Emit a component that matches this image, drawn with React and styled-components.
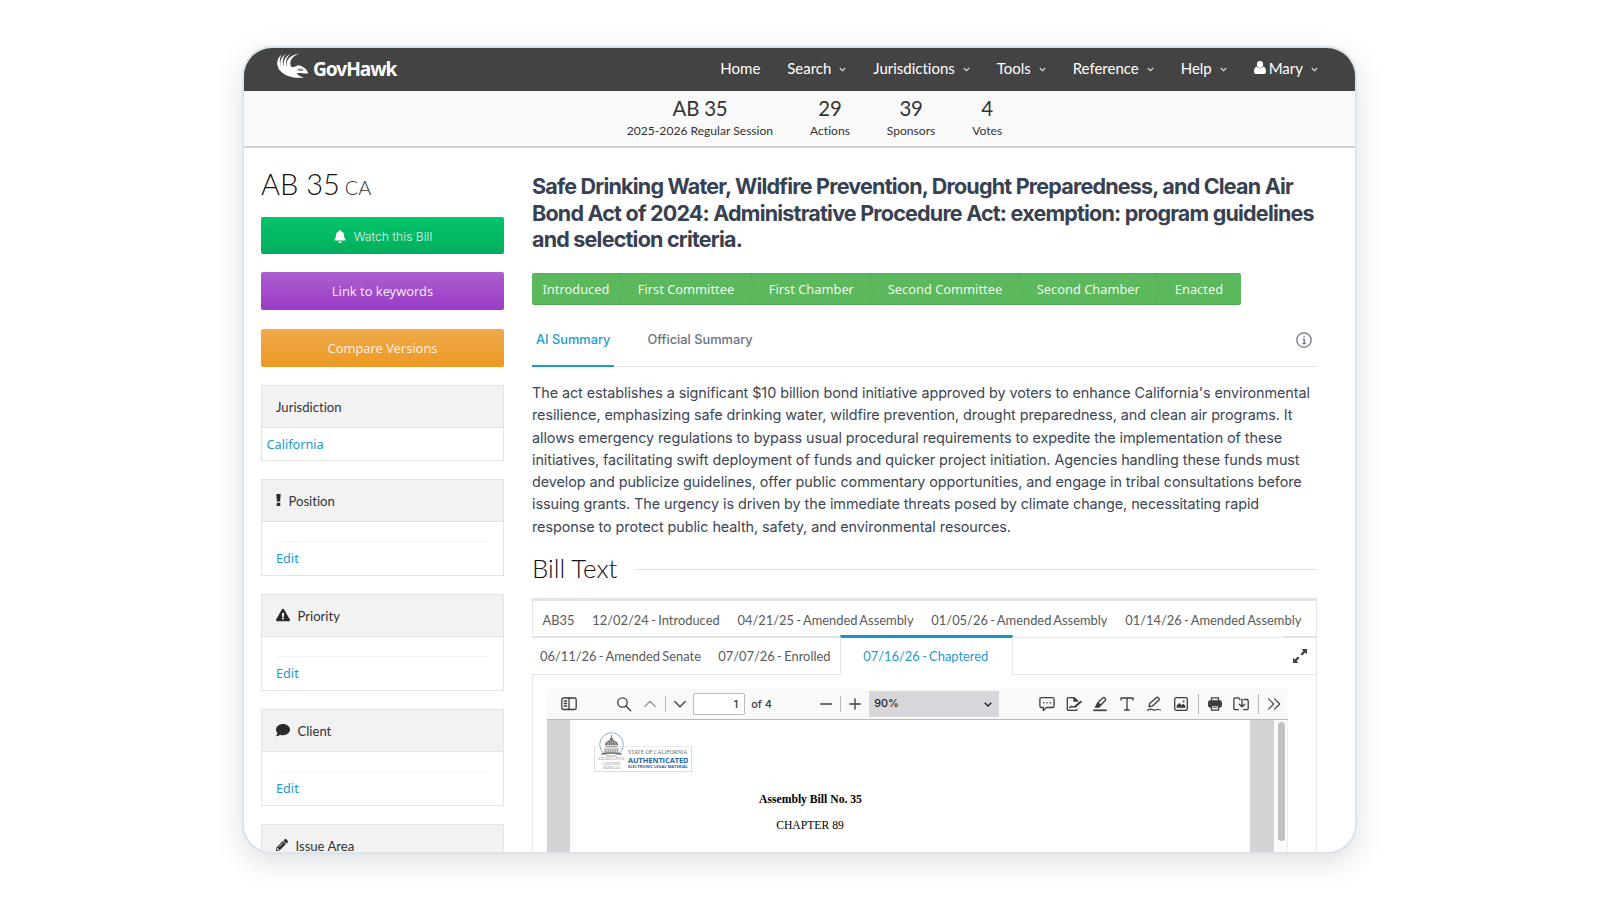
import React from "react";
import styled, { createGlobalStyle } from "styled-components";
import {
  FaBell,
  FaExclamationTriangle,
  FaComment,
  FaPencilAlt,
} from "react-icons/fa";

const GlobalStyle = createGlobalStyle`
  * {
    box-sizing: border-box;
  }
  body {
    margin: 0;
    background: #fff;
    color: #333;
    font-family: Lato, "Liberation Sans", sans-serif;
    font-variant-ligatures: none;
  }
  h1, h2, h3, p {
    margin: 0;
  }
  svg {
    display: block;
    flex: none;
  }
`;

const Page = styled.div`
  width: 1600px;
  height: 900px;
  padding: 46px 0 0 242px;
  overflow: hidden;
`;

const Card = styled.div`
  width: 1115px;
  height: 808px;
  border: 2px solid #d9e4ec;
  border-radius: 30px;
  overflow: hidden;
  background: #fff;
  box-shadow: 0 9px 28px rgba(60, 70, 80, 0.17);
`;

const NavBar = styled.div`
  height: 43px;
  background: #434343;
  color: #fff;
  display: flex;
  align-items: center;
  justify-content: space-between;
  padding: 0 37px 3px 32px;
`;

const Brand = styled.div`
  display: flex;
  align-items: center;
  gap: 4px;
  height: 40px;
  padding-bottom: 5px;
`;

const BrandName = styled.span`
  padding-top: 7px;
  font: 700 19.2px/24px "Noto Sans", sans-serif;
  letter-spacing: -1.1px;
`;

const NavItems = styled.div`
  display: flex;
  align-items: center;
  gap: 26.9px;
`;

const NavItem = styled.div`
  display: flex;
  align-items: center;
  font-size: 15px;
  line-height: 20px;
`;

const Caret = styled.svg`
  width: 7px;
  height: 5px;
  margin: 3px 0 0 8px;
`;

const UserIcon = styled.svg`
  width: 12px;
  height: 13px;
  margin: 0 3px 1px 0;
`;

const StatsBar = styled.div`
  height: 57px;
  background: #f9f9f9;
  border-bottom: 2px solid #d0d0d0;
  display: flex;
  justify-content: center;
  gap: 36.9px;
  padding: 4px 0 0 30px;
`;

const Stat = styled.div`
  display: flex;
  flex-direction: column;
  align-items: center;
`;

const StatValue = styled.div`
  font-size: 20.4px;
  line-height: 26px;
  letter-spacing: -0.2px;
`;

const StatLabel = styled.div`
  margin-top: 2px;
  font-size: 12.1px;
  line-height: 16px;
`;

const Main = styled.div`
  display: grid;
  grid-template-columns: 243px 785px;
  column-gap: 28px;
  padding: 18px 0 0 17px;
`;

const Sidebar = styled.div`
  display: flex;
  flex-direction: column;
`;

const BillNumber = styled.h1`
  height: 36px;
  font-size: 29px;
  font-weight: 300;
  line-height: 36px;
  color: #111;
  margin-bottom: 15px;
`;

const StateCode = styled.span`
  margin-left: -3px;
  font-size: 20px;
  color: #333;
`;

const ActionButton = styled.div`
  height: 38px;
  margin-bottom: 18.5px;
  display: flex;
  align-items: center;
  justify-content: center;
  border-radius: 2px;
  background: linear-gradient(${(p) => p.$from}, ${(p) => p.$to});
  color: rgba(255, 255, 255, 0.88);
  font: 400 12.85px/20px "Noto Sans", sans-serif;
`;

const WatchButton = styled(ActionButton)`
  height: 37px;
  margin-bottom: 18px;
  gap: 8px;
  padding: 2px 0 0 1px;
  font: 300 12.2px/20px Inter, sans-serif;
  svg {
    width: 12px;
    height: 13px;
    color: #fff;
  }
`;

const Panel = styled.div`
  height: ${(p) => p.$height || 97}px;
  margin-bottom: 18px;
  border: 1px solid #e3e3e3;
`;

const PanelHead = styled.div`
  height: 42px;
  display: flex;
  align-items: center;
  gap: 7.5px;
  padding-left: 14px;
  background: #f2f2f2;
  border-bottom: 1px solid #e3e3e3;
  font-size: 13.1px;
  svg {
    color: #2b2b2b;
    margin-bottom: 2px;
  }
`;

const PanelBody = styled.div`
  margin: 19px 15px 0 14px;
  padding-top: 5px;
  border-top: 1px solid #f3f3f3;
`;

const Link = styled.span`
  font: 400 12.7px/20px "Noto Sans", sans-serif;
  color: #2399d3;
`;

const JurisdictionBody = styled.div`
  padding: 5px 4.5px;
  line-height: 20px;
`;

const Content = styled.div`
  padding-top: 7px;
`;

const Title = styled.h2`
  height: 80px;
  margin-bottom: 20.3px;
  font: 700 21.5px/26.7px Inter, sans-serif;
  letter-spacing: -0.79px;
  color: #374151;
  white-space: nowrap;
`;

const Progress = styled.div`
  width: 709px;
  height: 31.4px;
  display: flex;
  align-items: center;
  padding-left: 10.5px;
  border-radius: 3px;
  background: #5cb85c;
  box-shadow: inset 0 -1px 0 #53a953, inset 0 1px 0 #56b056;
`;

const Step = styled.div`
  width: ${(p) => p.$width}px;
  height: 100%;
  display: flex;
  align-items: center;
  justify-content: space-between;
  padding-right: 12px;
  color: rgba(255, 255, 255, 0.92);
  font: 400 12.85px/20px "Noto Sans", sans-serif;
`;

const SummaryTabs = styled.div`
  height: 62.3px;
  display: flex;
  align-items: stretch;
  border-bottom: 1px solid #e5e7eb;
`;

const SummaryTab = styled.div`
  padding: 25px 4px 0;
  margin-right: 29px;
  margin-bottom: -1px;
  font: 500 12.8px/20px Inter, sans-serif;
  color: ${(p) => (p.$active ? "#1d9bd1" : "#6b7280")};
  border-bottom: 2px solid ${(p) => (p.$active ? "#1d9bd1" : "transparent")};
`;

const InfoIcon = styled.svg`
  width: 16px;
  height: 16px;
  margin: 27.5px 5px 0 auto;
`;

const Summary = styled.p`
  height: 155.8px;
  margin: 15.2px 0 15.5px;
  font: 400 14.4px/22.25px Inter, sans-serif;
  letter-spacing: -0.07px;
  color: #3c4656;
  white-space: nowrap;
`;

const SectionTitle = styled.h3`
  display: flex;
  align-items: center;
  gap: 19px;
  margin-bottom: 15px;
  font-size: 25.8px;
  font-weight: 300;
  line-height: 30px;
  color: #111;
  &::after {
    content: "";
    flex: 1;
    height: 1px;
    margin-top: 2px;
    background: #e2e2e2;
  }
`;

const VersionRow = styled.div`
  height: 37px;
  display: flex;
  align-items: center;
  gap: 17.8px;
  padding: 2.5px 0 0 9.5px;
  border: solid #e4e4e4;
  border-width: 3px 1px 0;
`;

const VersionTab = styled.span`
  font-size: 12.9px;
  line-height: 20px;
  word-spacing: -1px;
  color: #5a5a5a;
`;

const VersionRowActive = styled.div`
  height: 40px;
  display: flex;
  align-items: stretch;
  border-right: 1px solid #e6e6e6;
`;

const InactiveTabs = styled.div`
  width: 308px;
  margin-top: 1px;
  display: flex;
  align-items: center;
  gap: 17.3px;
  padding-left: 8px;
  border-top: 2px solid #e2e2e2;
  border-bottom: 1px solid #e6e6e6;
`;

const ActiveTab = styled.div`
  width: 173px;
  display: flex;
  align-items: center;
  justify-content: center;
  padding: 0 1.5px 1px 0;
  border: 1px solid #e6e6e6;
  border-top: 3px solid #1a91ca;
  border-bottom: none;
  span {
    color: #2399d3;
  }
`;

const TabsRest = styled.div`
  flex: 1;
  margin-top: 2px;
  display: flex;
  justify-content: flex-end;
  border-top: 1px solid #ebebeb;
  border-bottom: 1px solid #e6e6e6;
`;

const ExpandCell = styled.div`
  width: 32px;
  margin-top: -2px;
  padding: 11px 0 0 9px;
  border-top: 2px solid #e2e2e2;
`;

const TextPanel = styled.div`
  height: 190px;
  padding: 14px 0 0 14px;
  border: solid #e6e6e6;
  border-width: 0 1px;
`;

const Viewer = styled.div`
  width: 741px;
`;

const Toolbar = styled.div`
  height: 31px;
  display: flex;
  align-items: center;
  background: #f9f9fa;
  border-bottom: 1px solid #b9b9bb;
  color: #3d3d3f;
`;

const ToolGroup = styled.div`
  display: flex;
  align-items: center;
  margin-left: ${(p) => p.$left || 0}px;
`;

const Tool = styled.div`
  width: ${(p) => p.$width || 26.7}px;
  height: 26px;
  display: flex;
  align-items: center;
  justify-content: center;
  opacity: ${(p) => (p.$dim ? 0.5 : 1)};
`;

const Divider = styled.div`
  width: 1px;
  height: ${(p) => p.$height || 16}px;
  margin: 0 ${(p) => p.$space || 0}px;
  background: #b8b8bb;
`;

const PageInput = styled.div`
  width: 52px;
  height: 22px;
  padding-right: 6px;
  border: 1px solid #bbbbbc;
  border-radius: 2px;
  background: #fff;
  text-align: right;
  font: 500 11px/20px Inter, sans-serif;
`;

const PageTotal = styled.span`
  width: 21px;
  margin-left: 6px;
  white-space: nowrap;
  font: 500 10.9px/20px Inter, sans-serif;
`;

const ZoomSelect = styled.div`
  width: 130px;
  height: 26px;
  margin-left: 1px;
  display: flex;
  align-items: center;
  justify-content: space-between;
  padding: 0 7px 0 5px;
  background: #d7d7db;
  color: #1c1c1e;
  font: 500 10.8px/20px Inter, sans-serif;
`;

const ViewerBody = styled.div`
  height: 140px;
  display: flex;
  padding-left: 23px;
  background: #d4d4d7;
`;

const Sheet = styled.div`
  width: 680px;
  padding: 12px 0 0 24px;
  background: #fff;
`;

const ScrollTrack = styled.div`
  width: 14px;
  margin-left: auto;
  padding: 2px 0 0 4px;
  background: #fbfbfb;
  border-right: 1px solid #ededed;
`;

const ScrollThumb = styled.div`
  width: 7px;
  height: 119px;
  border-radius: 4px;
  background: #c1c1c1;
`;

const Seal = styled.div`
  width: 98px;
  height: 26px;
  margin-top: 14px;
  display: flex;
  border: 1px solid #dcdcdc;
  border-top-color: #ececec;
`;

const SealEmblem = styled.div`
  width: 33px;
  margin-top: -15px;
  display: flex;
  flex-direction: column;
  align-items: center;
  font: 400 4.1px/4.3px "Liberation Serif", serif;
  text-align: center;
  color: #8d8d8d;
`;

const SealText = styled.div`
  padding-top: 2px;
  white-space: nowrap;
  color: #1f62a8;
`;

const SealState = styled.div`
  font: 400 5.5px/7px "Liberation Serif", serif;
  color: #666;
`;

const SealAuth = styled.div`
  font: 700 7.3px/8px "Open Sans", sans-serif;
`;

const SealKind = styled.div`
  font: 700 4.05px/5px "Open Sans", sans-serif;
`;

const ActHeading = styled.div`
  width: 433px;
  margin-top: 19px;
  text-align: center;
  color: #000;
  font: 700 11.65px/18px "Liberation Serif", serif;
`;

const Chapter = styled(ActHeading)`
  width: 432px;
  margin-top: 8px;
  font-weight: 400;
`;

const stroke = {
  fill: "none",
  stroke: "currentColor",
  strokeWidth: 1.3,
  strokeLinecap: "round",
  strokeLinejoin: "round",
};

const HawkLogo = () => (
  <svg width="33" height="27" viewBox="0 0 33 27" fill="#fff">
    <path d="M6 2.3C.5 6.500-.5 13 4 18.500L6.500 17C3 12 3 6.500 6 2.300z" />
    <path d="M10.300 1.600C4 6 2.800 12 6 17.500l3-.5C5.700 11.500 6.300 6 10.300 1.600z" />
    <path d="M15.200 1.200C7.500 5.500 6 11.500 9 17.500l3-.5C8.800 11.500 9.500 5.500 15.200 1.200z" />
    <path d="M23.200 1.500C12 3.500 8.500 10 12 17l4-1c-3.700-5-1.500-11 7.200-14.500z" />
    <path d="M3 17C8 24.500 18 26.800 28 25.400c-3.600-.8-6-2-7.300-4.200 3.600-.9 7.400.8 11.400.3C31 17 27 14 22 13.300c-2 1.400-4.300 1.900-6.400 1.700C13 13.500 6 13 3 17z" />
    <path
      d="M22 17.600c1.700-.9 3.300-.7 4.800.4-1.600.6-3.200.6-4.800-.4z"
      fill="none"
      stroke="#434343"
      strokeWidth=".9"
    />
  </svg>
);

const Chevron = () => (
  <Caret viewBox="0 0 7 5">
    <path d="M.8 1l2.700 2.700L6.200 1" fill="none" stroke="#ddd" strokeWidth="1.1" />
  </Caret>
);

const StepArrow = () => (
  <svg width="9" height="29" viewBox="0 0 9 29">
    <path d="M1 0l7 14.500L1 29" fill="none" stroke="#55b055" strokeWidth="1.1" />
  </svg>
);

const Dome = () => (
  <svg width="25" height="25" viewBox="0 0 25 25">
    <circle cx="12.500" cy="12.500" r="11.800" fill="#fff" stroke="#7fa5c9" strokeWidth=".9" />
    <path fill="#777" d="M12 3h1v3h1.200v2c3 .8 4.800 2.700 5 5.200H5.800c.2-2.500 2-4.400 5-5.200V6H12z" />
    <path d="M6.500 14.700h12M5 17h15" stroke="#999" strokeWidth="1.2" />
    <path d="M5.500 19h14" stroke="#888" strokeWidth="2.6" strokeDasharray="1 .8" />
    <path d="M2.500 22.300c4-1.600 16-1.600 20 0" stroke="#666" strokeWidth="1.5" fill="none" />
    <path d="M9 9v4M11.300 8.500V13M13.700 8.500V13M16 9v4" stroke="#ddd" strokeWidth=".5" />
  </svg>
);

const ExclamationIcon = () => (
  <svg width="5" height="12" viewBox="0 0 5 12">
    <path d="M.3 0h4.400l-.6 7.500H.9zM.7 8.700h3.600V12H.7z" fill="#2b2b2b" />
  </svg>
);

const icons = {
  sidebar: (
    <>
      <rect x=".8" y="2" width="14.400" height="11.500" rx="1.800" />
      <path d="M8 2v11.500M3.200 5h2.400M3.200 7.500h2.400M3.200 10h2.400" />
    </>
  ),
  search: (
    <>
      <circle cx="6.500" cy="6.500" r="4.700" />
      <path d="M10 10l4.700 4.700" />
    </>
  ),
  up: <path d="M2.800 10.500L8 5.300l5.200 5.200" />,
  down: <path d="M2.800 5.500L8 10.700l5.200-5.200" />,
  minus: <path d="M2.700 8h10.600" />,
  plus: <path d="M2.700 8h10.600M8 2.700v10.600" />,
  comment: (
    <>
      <path d="M2.300 1.700h11.400a1.400 1.400 0 011.400 1.400v7a1.400 1.400 0 01-1.400 1.400H7.500L4.300 14.600v-3.100h-2A1.400 1.400 0 01.9 10.100v-7a1.400 1.400 0 011.400-1.400z" />
      <path d="M4.700 6.700h.1M8 6.700h.1M11.300 6.700h.1" strokeWidth="1.6" />
    </>
  ),
  sign: (
    <>
      <path d="M11 13.400a1.300 1.300 0 01-1.300 1H2.600a1.300 1.300 0 01-1.300-1.300V2.900a1.300 1.300 0 011.300-1.300H8L11.500 5" />
      <path d="M8 1.800V5h3.200z" fill="currentColor" />
      <path d="M3.500 11.800l1.800-1.700 1 1.200 1.200-.8" />
      <path d="M9 10.800l5.700-5" strokeWidth="2.1" />
    </>
  ),
  highlight: (
    <>
      <path d="M6 6.500l5-4.700a1 1 0 011.400 0l1 1a1 1 0 010 1.400L8.700 9.300z" />
      <path d="M5.500 7.200l2.700 2.600-1.500 1.400H3.500z" fill="currentColor" />
      <path d="M1.300 14.300h13.400" strokeWidth="1.7" strokeLinecap="butt" />
    </>
  ),
  text: <path d="M2 4V2h12v2M8 2v12M5.700 14h4.600" />,
  draw: (
    <>
      <path d="M3 10.700l.7-3.200 6.800-5.900a1.300 1.300 0 011.800.1l.6.7a1.300 1.300 0 01-.1 1.800L6.200 10.200z" />
      <path d="M1.500 14.300c4-3 5.500.2 7.500-.2 1.500-.3 2.500-1.200 5.500-.1" strokeWidth="1.1" />
    </>
  ),
  image: (
    <>
      <rect x="1.700" y="1.700" width="12.600" height="12.600" rx="1.600" />
      <path d="M4 11.200V9.400l2.300-2 2.200 2 1.600-1.200L12 9.700v1.500z" fill="currentColor" strokeWidth=".8" />
      <path d="M10.600 5.500h.1" strokeWidth="1.8" />
    </>
  ),
  print: (
    <>
      <path d="M4.500 4.800V1.800h7v3" />
      <rect x="1.700" y="5" width="12.600" height="6" rx="1.400" fill="currentColor" />
      <path d="M4.500 9.500h7v4.700h-7z" fill="#f9f9fa" />
      <path d="M6.300 11.500h3.400" strokeWidth=".8" />
    </>
  ),
  save: (
    <>
      <path d="M5.500 13.600H2.100a1.200 1.200 0 01-1.200-1.200V3a1.200 1.200 0 011.200-1.200h3.200L7 3.500M11 3.500h3a1.200 1.200 0 011.200 1.200v7.700a1.200 1.200 0 01-1.200 1.200h-3.500" />
      <path d="M9 3.200v7.500M6.300 8.200L9 10.900l2.700-2.700" />
    </>
  ),
  more: <path d="M2.500 2.800L7.700 8l-5.200 5.200M8.500 2.800L13.700 8l-5.200 5.200" strokeWidth="1.1" />,
};

const ToolIcon = ({ name, width, dim }) => (
  <Tool $width={width} $dim={dim}>
    <svg width="16" height="16" viewBox="0 0 16 16" {...stroke}>
      {icons[name]}
    </svg>
  </Tool>
);

const navItems = ["Search", "Jurisdictions", "Tools", "Reference", "Help"];

const stats = [
  ["AB 35", "2025-2026 Regular Session"],
  ["29", "Actions"],
  ["39", "Sponsors"],
  ["4", "Votes"],
];

const panels = [
  { title: "Position", icon: <ExclamationIcon />, editable: true },
  { title: "Priority", icon: <FaExclamationTriangle size={14} />, editable: true },
  { title: "Client", icon: <FaComment size={14} />, editable: true },
  { title: "Issue Area", icon: <FaPencilAlt size={12} /> },
];

const steps = [
  ["Introduced", 95.3],
  ["First Committee", 131],
  ["First Chamber", 119],
  ["Second Committee", 149],
  ["Second Chamber", 138],
];

const titleLines = [
  "Safe Drinking Water, Wildfire Prevention, Drought Preparedness, and Clean Air",
  "Bond Act of 2024: Administrative Procedure Act: exemption: program guidelines",
  "and selection criteria.",
];

const summaryLines = [
  "The act establishes a significant $10 billion bond initiative approved by voters to enhance California's environmental",
  "resilience, emphasizing safe drinking water, wildfire prevention, drought preparedness, and clean air programs. It",
  "allows emergency regulations to bypass usual procedural requirements to expedite the implementation of these",
  "initiatives, facilitating swift deployment of funds and quicker project initiation. Agencies handling these funds must",
  "develop and publicize guidelines, offer public commentary opportunities, and engage in tribal consultations before",
  "issuing grants. The urgency is driven by the immediate threats posed by climate change, necessitating rapid",
  "response to protect public health, safety, and environmental resources.",
];

const versions = [
  "AB35",
  "12/02/24 - Introduced",
  "04/21/25 - Amended Assembly",
  "01/05/26 - Amended Assembly",
  "01/14/26 - Amended Assembly",
];

const PdfToolbar = () => (
  <Toolbar>
    <ToolGroup $left={8.3}>
      <ToolIcon name="sidebar" />
    </ToolGroup>
    <ToolGroup $left={28.5}>
      <ToolIcon name="search" />
      <ToolIcon name="up" width={26.5} dim />
      <Divider $space={1} />
      <ToolIcon name="down" width={26.5} />
      <PageInput>1</PageInput>
      <PageTotal>of 4</PageTotal>
    </ToolGroup>
    <ToolGroup $left={40.5}>
      <ToolIcon name="minus" width={27} />
      <Divider $space={0.3} />
      <ToolIcon name="plus" width={27} />
      <ZoomSelect>
        90%
        <svg width="8" height="5" viewBox="0 0 8 5">
          <path d="M.7.700L4 4 7.300.700" fill="none" stroke="currentColor" strokeWidth="1.3" />
        </svg>
      </ZoomSelect>
    </ToolGroup>
    <ToolGroup $left={34.500}>
      <ToolIcon name="comment" />
      <ToolIcon name="sign" />
      <ToolIcon name="highlight" />
      <ToolIcon name="text" width={27} />
      <ToolIcon name="draw" width={27} />
      <ToolIcon name="image" width={27} />
      <Divider $height={20} $space={3} />
      <ToolIcon name="print" width={26} />
      <ToolIcon name="save" />
      <Divider $height={20} $space={3} />
      <ToolIcon name="more" width={25} />
    </ToolGroup>
  </Toolbar>
);

const App = () => {
  return (
    <Page>
      <GlobalStyle />
      <Card>
        <NavBar>
          <Brand>
            <HawkLogo />
            <BrandName>GovHawk</BrandName>
          </Brand>
          <NavItems>
            <NavItem>Home</NavItem>
            {navItems.map((item) => (
              <NavItem key={item}>
                {item}
                <Chevron />
              </NavItem>
            ))}
            <NavItem>
              <UserIcon viewBox="0 0 12 13" fill="#fff">
                <ellipse cx="6" cy="3.400" rx="3.100" ry="3.400" />
                <path d="M2.600 5.600C.6 6.200 0 8.500 0 10.400 0 12.200 1 13 2.400 13h7.200c1.400 0 2.400-.8 2.400-2.600 0-1.900-.6-4.200-2.600-4.800-.8 1-2 1.700-3.400 1.700s-2.600-.7-3.400-1.700z" />
              </UserIcon>
              Mary
              <Chevron />
            </NavItem>
          </NavItems>
        </NavBar>
        <StatsBar>
          {stats.map(([value, label]) => (
            <Stat key={label}>
              <StatValue>{value}</StatValue>
              <StatLabel>{label}</StatLabel>
            </Stat>
          ))}
        </StatsBar>
        <Main>
          <Sidebar>
            <BillNumber>
              AB 35 <StateCode>CA</StateCode>
            </BillNumber>
            <WatchButton $from="#03c56b" $to="#05ae5e">
              <FaBell />
              Watch this Bill
            </WatchButton>
            <ActionButton $from="#ac5fd0" $to="#9a3bc6">
              Link to keywords
            </ActionButton>
            <ActionButton $from="#f0ab4c" $to="#ec9922">
              Compare Versions
            </ActionButton>
            <Panel $height={76}>
              <PanelHead>Jurisdiction</PanelHead>
              <JurisdictionBody>
                <Link>California</Link>
              </JurisdictionBody>
            </Panel>
            {panels.map((panel) => (
              <Panel key={panel.title}>
                <PanelHead>
                  {panel.icon}
                  {panel.title}
                </PanelHead>
                {panel.editable && (
                  <PanelBody>
                    <Link>Edit</Link>
                  </PanelBody>
                )}
              </Panel>
            ))}
          </Sidebar>
          <Content>
            <Title>
              {titleLines.map((line) => (
                <div key={line}>{line}</div>
              ))}
            </Title>
            <Progress>
              {steps.map(([label, width]) => (
                <Step key={label} $width={width}>
                  {label}
                  <StepArrow />
                </Step>
              ))}
              <Step>Enacted</Step>
            </Progress>
            <SummaryTabs>
              <SummaryTab $active>AI Summary</SummaryTab>
              <SummaryTab>Official Summary</SummaryTab>
              <InfoIcon viewBox="0 0 16 16" fill="none" stroke="#6b7280">
                <circle cx="8" cy="8" r="7.200" strokeWidth="1.3" />
                <path d="M6.700 7.200H8.200V11.500M6.500 11.500h3.300M7.500 4.600h1.200" strokeWidth="1.3" />
              </InfoIcon>
            </SummaryTabs>
            <Summary>
              {summaryLines.map((line) => (
                <React.Fragment key={line}>
                  {line}
                  <br />
                </React.Fragment>
              ))}
            </Summary>
            <SectionTitle>Bill Text</SectionTitle>
            <VersionRow>
              {versions.map((version) => (
                <VersionTab key={version}>{version}</VersionTab>
              ))}
            </VersionRow>
            <VersionRowActive>
              <InactiveTabs>
                <VersionTab>06/11/26 - Amended Senate</VersionTab>
                <VersionTab>07/07/26 - Enrolled</VersionTab>
              </InactiveTabs>
              <ActiveTab>
                <VersionTab>07/16/26 - Chaptered</VersionTab>
              </ActiveTab>
              <TabsRest>
                <ExpandCell>
                  <svg width="14" height="14" viewBox="0 0 14 14">
                    <path
                      d="M8.500 0H14v5.500l-1.900-1.900-3 3-1.700-1.700 3-3zM5.500 14H0V8.500l1.900 1.900 3-3 1.700 1.700-3 3z"
                      fill="#444"
                    />
                  </svg>
                </ExpandCell>
              </TabsRest>
            </VersionRowActive>
            <TextPanel>
              <Viewer>
                <PdfToolbar />
                <ViewerBody>
                  <Sheet>
                    <Seal>
                      <SealEmblem>
                        <Dome />
                        LEGISLATIVE
                        <br />
                        COUNSEL
                        <br />
                        BUREAU
                      </SealEmblem>
                      <SealText>
                        <SealState>STATE OF CALIFORNIA</SealState>
                        <SealAuth>AUTHENTICATED</SealAuth>
                        <SealKind>ELECTRONIC LEGAL MATERIAL</SealKind>
                      </SealText>
                    </Seal>
                    <ActHeading>Assembly Bill No. 35</ActHeading>
                    <Chapter>CHAPTER 89</Chapter>
                  </Sheet>
                  <ScrollTrack>
                    <ScrollThumb />
                  </ScrollTrack>
                </ViewerBody>
              </Viewer>
            </TextPanel>
          </Content>
        </Main>
      </Card>
    </Page>
  );
};

export default App;
